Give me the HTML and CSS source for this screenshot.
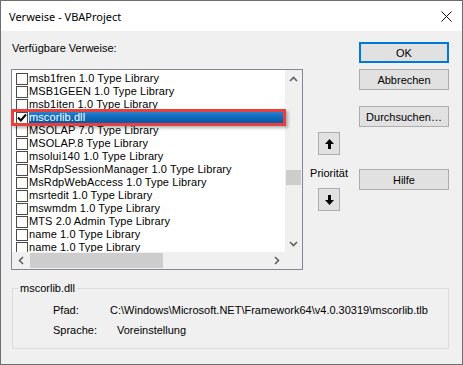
FILE: index.html
```html
<!DOCTYPE html>
<html>
<head>
    <meta charset="UTF-8">
    <title>Verweise - VBAProject</title>
    <link rel="stylesheet" href="styles.css">
</head>
<body>

<div class="window">
    <div class="titlebar">
        <span class="title">Verweise - VBAProject</span>
        <svg class="close" width="11" height="11" viewBox="0 0 11 11">
            <path d="M0.5 0.5 L10.5 10.5 M10.5 0.5 L0.5 10.5" stroke="#111" stroke-width="1"/>
        </svg>
    </div>

    <div class="client">
        <div class="top">
            <div class="left">
                <div class="label">Verfügbare Verweise:</div>
                <div class="list">
                    <div class="items">
                        <div class="item"><span class="check"></span><span class="name">msb1fren 1.0 Type Library</span></div>
                        <div class="item"><span class="check"></span><span class="name">MSB1GEEN 1.0 Type Library</span></div>
                        <div class="item"><span class="check"></span><span class="name">msb1iten 1.0 Type Library</span></div>
                        <div class="item selected"><span class="check checked">
                            <svg width="10" height="10" viewBox="0 0 10 10"><path d="M1 4.5 L3.8 7.5 L9 1.5" fill="none" stroke="#000" stroke-width="2"/></svg>
                        </span><span class="name">mscorlib.dll</span></div>
                        <div class="item"><span class="check"></span><span class="name">MSOLAP 7.0 Type Library</span></div>
                        <div class="item"><span class="check"></span><span class="name">MSOLAP.8 Type Library</span></div>
                        <div class="item"><span class="check"></span><span class="name">msolui140 1.0 Type Library</span></div>
                        <div class="item"><span class="check"></span><span class="name">MsRdpSessionManager 1.0 Type Library</span></div>
                        <div class="item"><span class="check"></span><span class="name">MsRdpWebAccess 1.0 Type Library</span></div>
                        <div class="item"><span class="check"></span><span class="name">msrtedit 1.0 Type Library</span></div>
                        <div class="item"><span class="check"></span><span class="name">mswmdm 1.0 Type Library</span></div>
                        <div class="item"><span class="check"></span><span class="name">MTS 2.0 Admin Type Library</span></div>
                        <div class="item"><span class="check"></span><span class="name">name 1.0 Type Library</span></div>
                        <div class="item"><span class="check"></span><span class="name">name 1.0 Type Library</span></div>
                    </div>
                    <div class="vscroll">
                        <div class="sbtn">
                            <svg width="9" height="6" viewBox="0 0 9 6"><path d="M1 5 L4.5 1.5 L8 5" fill="none" stroke="#606060" stroke-width="1.6"/></svg>
                        </div>
                        <div class="vtrack"><div class="vthumb"></div></div>
                        <div class="sbtn">
                            <svg width="9" height="6" viewBox="0 0 9 6"><path d="M1 1 L4.5 4.5 L8 1" fill="none" stroke="#606060" stroke-width="1.6"/></svg>
                        </div>
                    </div>
                    <div class="hscroll">
                        <div class="sbtn">
                            <svg width="6" height="9" viewBox="0 0 6 9"><path d="M5 1 L1.5 4.5 L5 8" fill="none" stroke="#606060" stroke-width="1.6"/></svg>
                        </div>
                        <div class="htrack"><div class="hthumb"></div></div>
                        <div class="sbtn">
                            <svg width="6" height="9" viewBox="0 0 6 9"><path d="M1 1 L4.5 4.5 L1 8" fill="none" stroke="#606060" stroke-width="1.6"/></svg>
                        </div>
                    </div>
                    <div class="corner"></div>
                    <div class="marker"></div>
                </div>
            </div>

            <div class="middle">
                <button class="prio">
                    <svg width="9" height="10" viewBox="0 0 9 10"><path d="M4.5 0 L9 5 L6 5 L6 10 L3 10 L3 5 L0 5 Z" fill="#000"/></svg>
                </button>
                <div class="prio-label">Priorität</div>
                <button class="prio">
                    <svg width="9" height="10" viewBox="0 0 9 10"><path d="M4.5 10 L9 5 L6 5 L6 0 L3 0 L3 5 L0 5 Z" fill="#000"/></svg>
                </button>
            </div>

            <div class="right">
                <button class="btn default">OK</button>
                <button class="btn">Abbrechen</button>
                <button class="btn browse">Durchsuchen…</button>
                <button class="btn help">Hilfe</button>
            </div>
        </div>

        <fieldset class="details">
            <legend>mscorlib.dll</legend>
            <div class="row">
                <span class="key">Pfad:</span>
                <span class="val">C:\Windows\Microsoft.NET\Framework64\v4.0.30319\mscorlib.tlb</span>
            </div>
            <div class="row">
                <span class="key">Sprache:</span>
                <span class="val lang">Voreinstellung</span>
            </div>
        </fieldset>
    </div>
</div>

</body>
</html>
```

FILE: styles.css
```css
body {
    margin: 0;
    padding: 0;
    background: #fff;
    font-family: "Liberation Sans", Arial, sans-serif;
    font-size: 11px;
    color: #000;
}
.window {
    width: 463px;
    height: 365px;
    box-sizing: border-box;
    border: 1px solid #6e6e6e;
    display: flex;
    flex-direction: column;
    overflow: hidden;
}
.titlebar {
    height: 30px;
    flex: none;
    background: #fff;
    display: flex;
    align-items: center;
    justify-content: space-between;
    padding: 0 10px 0 8px;
}
.title {
    font-family: "Noto Sans", sans-serif;
    font-size: 11px;
    color: #000;
}
.client {
    flex: 1;
    background: #f0f0f0;
    padding: 11px 12px 0 10px;
}
.top {
    display: flex;
}
.left {
    width: 292px;
}
.label {
    line-height: 13px;
    padding-left: 1px;
    margin-bottom: 14px;
}
.list {
    position: relative;
    width: 292px;
    height: 201px;
    box-sizing: border-box;
    border: 1px solid #828790;
    background: #fff;
    display: grid;
    grid-template-columns: 1fr 17px;
    grid-template-rows: 1fr 17px;
}
.items {
    overflow: hidden;
    padding-top: 2px;
}
.item {
    height: 13px;
    display: flex;
    align-items: center;
    white-space: nowrap;
}
.check {
    width: 12px;
    height: 12px;
    box-sizing: border-box;
    border: 1px solid #4a4a4a;
    background: #fff;
    margin-left: 4px;
    margin-right: 1px;
    flex: none;
    display: flex;
    align-items: center;
    justify-content: center;
}
.name {
    line-height: 13px;
    letter-spacing: 0.1px;
}
.selected .name {
    flex: 1;
    color: #fff;
    background: linear-gradient(#2a86d6, #0a63b4 60%, #0658a6);
}
.marker {
    position: absolute;
    left: -1px;
    top: 39px;
    width: 275px;
    height: 17px;
    box-sizing: border-box;
    border: 3px solid #e8403c;
    box-shadow: 2px 2px 3px rgba(0, 0, 0, 0.3);
}
.vscroll {
    background: #f0f0f0;
    display: flex;
    flex-direction: column;
}
.sbtn {
    width: 17px;
    height: 17px;
    flex: none;
    display: flex;
    align-items: center;
    justify-content: center;
}
.vtrack {
    flex: 1;
}
.vthumb {
    margin: 83px 1px 0 1px;
    height: 15px;
    background: #cdcdcd;
}
.hscroll {
    background: #f0f0f0;
    display: flex;
}
.htrack {
    flex: 1;
}
.hthumb {
    margin: 1px 0 0 1px;
    width: 133px;
    height: 15px;
    background: #cdcdcd;
}
.corner {
    background: #f0f0f0;
}
.middle {
    width: 52px;
    display: flex;
    flex-direction: column;
    align-items: center;
    padding-top: 90px;
}
.prio {
    width: 22px;
    height: 23px;
    padding: 0;
    background: #e1e1e1;
    border: 1px solid #adadad;
    display: flex;
    align-items: center;
    justify-content: center;
}
.prio-label {
    line-height: 13px;
    margin: 12px 0 8px 0;
    color: #000;
}
.right {
    margin-left: 4px;
    display: flex;
    flex-direction: column;
}
.btn {
    width: 90px;
    height: 21px;
    padding: 0;
    font-family: "Liberation Sans", Arial, sans-serif;
    font-size: 11px;
    color: #000;
    background: #e1e1e1;
    border: 1px solid #adadad;
    margin-bottom: 6px;
}
.btn.default {
    border: 2px solid #0078d7;
}
.btn.browse {
    margin-top: 10px;
}
.btn.help {
    margin-top: 36px;
}
.details {
    margin: 11px 0 0 1px;
    width: 437px;
    height: 68px;
    box-sizing: border-box;
    border: 1px solid #dcdcdc;
    padding: 9px 0 0 5px;
}
.details legend {
    padding: 0 2px;
    line-height: 14px;
}
.row {
    display: flex;
    line-height: 13px;
    margin-bottom: 7px;
}
.key {
    width: 57px;
    margin-left: 35px;
}
.val.lang {
    margin-left: 7px;
}
```
